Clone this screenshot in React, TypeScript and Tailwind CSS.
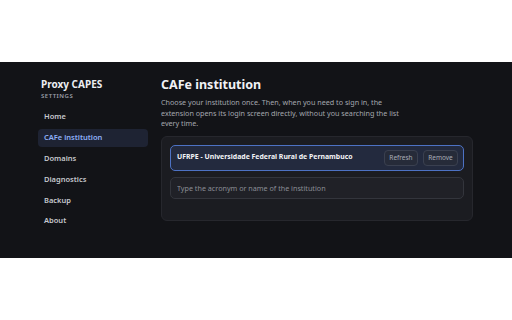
import React from 'react'

const navItems = ['Home', 'CAFe institution', 'Domains', 'Diagnostics', 'Backup', 'About']

const App = () => {
    const active = 'CAFe institution'

    return (
        <div className="w-[512px] h-[320px] bg-white pt-[62px]" style={{ fontFamily: '"Noto Sans", sans-serif' }}>
            <div className="h-[196px] bg-[#121317] flex pl-[38px]">
                <aside className="w-[110px] pt-[15px]">
                    <h1 className="pl-[3px] text-[10px] leading-[14px] font-bold text-[#eceef2]">Proxy CAPES</h1>
                    <p className="pl-[3px] mt-[1px] text-[6px] leading-[8px] font-semibold tracking-[0.5px] text-[#9a9ea8]">SETTINGS</p>
                    <nav className="mt-[8px] flex flex-col gap-[2.8px]">
                        {navItems.map((item) => (
                            <div
                                key={item}
                                className={
                                    item === active
                                        ? 'h-[18px] flex items-center px-[6px] rounded-[4px] bg-[#1e2333] text-[7.5px] font-semibold text-[#8eb0f7]'
                                        : 'h-[18px] flex items-center px-[6px] rounded-[4px] text-[7.5px] font-semibold text-[#c6c8ce]'
                                }
                            >
                                {item}
                            </div>
                        ))}
                    </nav>
                </aside>
                <main className="ml-[13px] w-[312px] pt-[15px]">
                    <h2 className="text-[12.5px] leading-[16px] font-bold text-[#f1f2f5]">CAFe institution</h2>
                    <p className="mt-[4px] w-[240px] text-[7.2px] leading-[10.5px] text-[#a4a7ae]">
                        Choose your institution once. Then, when you need to sign in, the extension opens its login screen directly, without you searching the list every time.
                    </p>
                    <div className="mt-[7px] h-[85px] rounded-[6px] bg-[#1b1c21] border border-[#26272d] p-[8px] flex flex-col gap-[6px]">
                        <div className="h-[26px] rounded-[5px] border border-[#4d72c4] bg-[#232a3e] flex items-center pl-[6px] pr-[5px]">
                            <span className="flex-1 text-[6.9px] font-bold text-[#f3f4f7]">UFRPE - Universidade Federal Rural de Pernambuco</span>
                            <button className="w-[34px] h-[16px] rounded-[4px] border border-[#3a4050] bg-[#262b39] text-[6.5px] text-[#a8acb6]">Refresh</button>
                            <button className="ml-[5px] w-[35px] h-[16px] rounded-[4px] border border-[#3a4050] bg-[#262b39] text-[6.5px] text-[#a8acb6]">Remove</button>
                        </div>
                        <input
                            className="h-[22px] rounded-[5px] border border-[#33353c] bg-[#202127] px-[6px] text-[7.2px] text-[#d0d2d8] placeholder:text-[#8a8d95] outline-none"
                            placeholder="Type the acronym or name of the institution"
                        />
                    </div>
                </main>
            </div>
        </div>
    )
}

export default App
